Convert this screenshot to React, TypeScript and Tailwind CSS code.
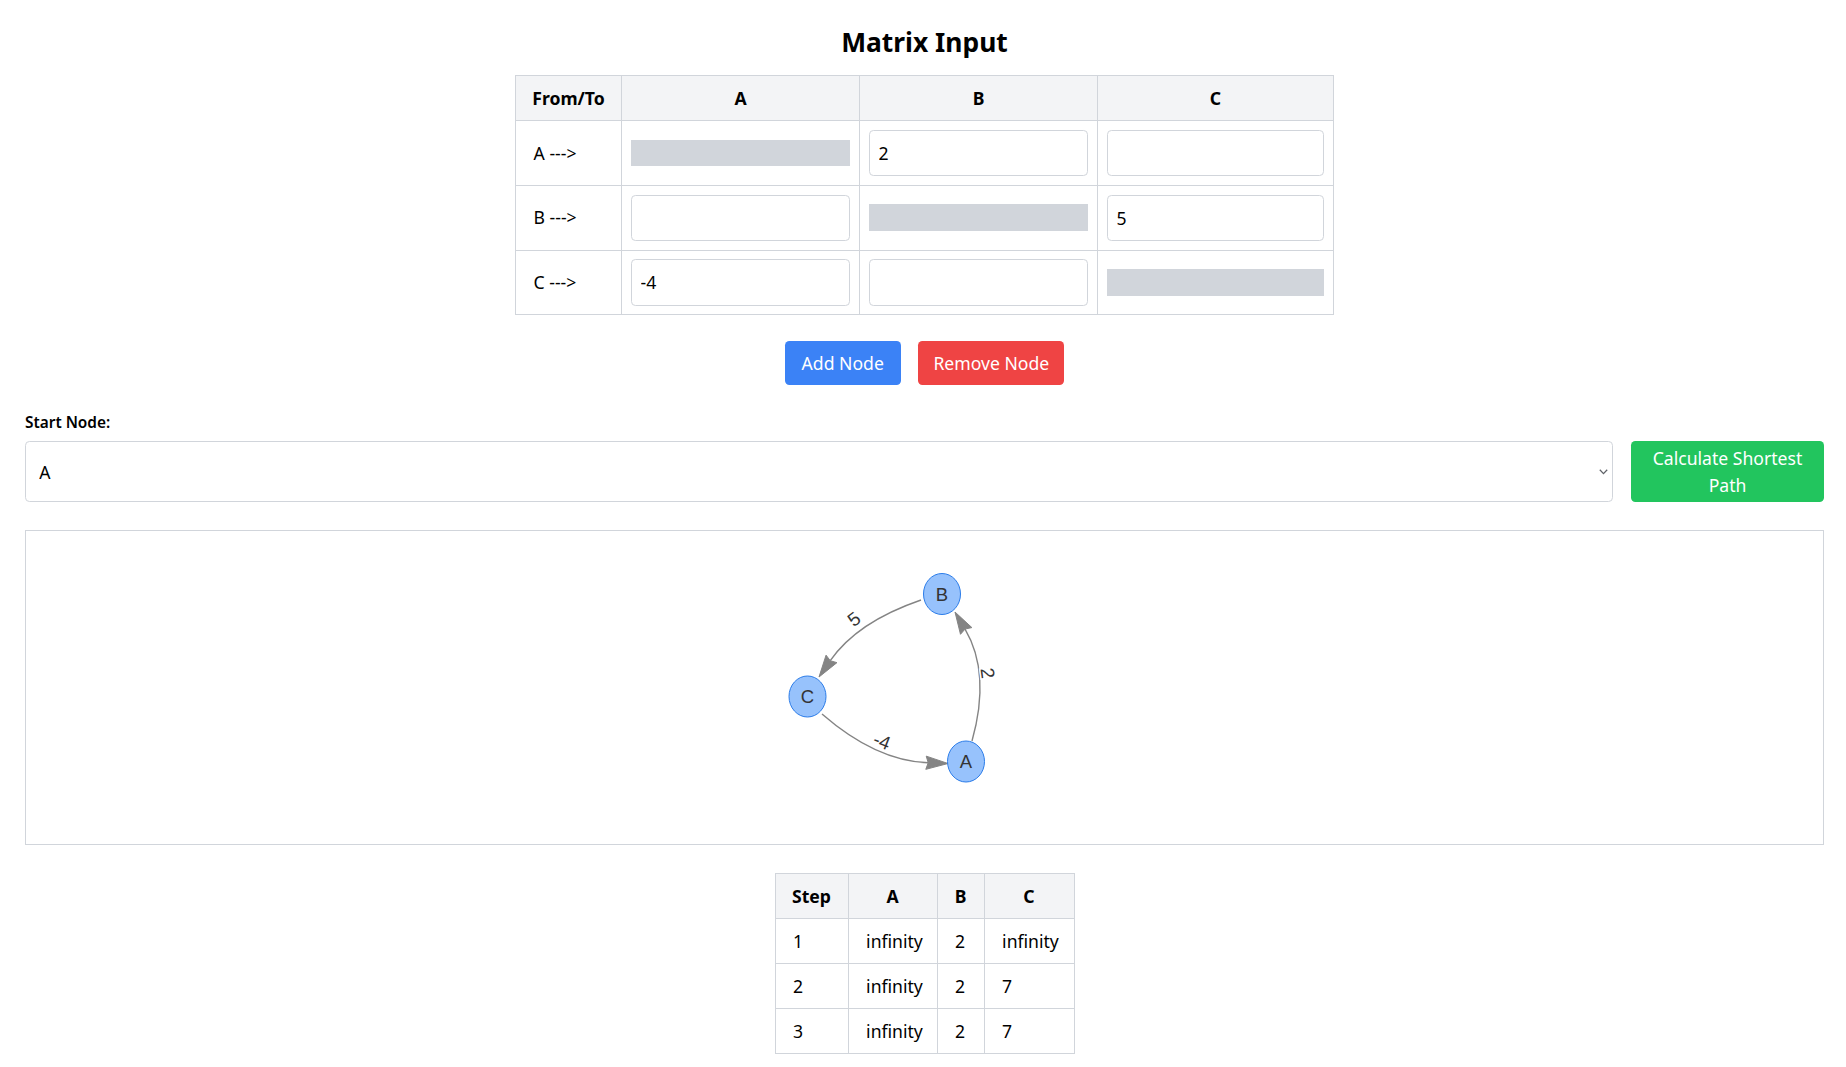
import React from "react";

const nodeNames = ["A", "B", "C"];

// null = diagonal (no self edge)
const matrix: (string | null)[][] = [
  [null, "2", ""],
  ["", null, "5"],
  ["-4", "", null],
];

const steps = [
  { step: 1, dist: ["infinity", "2", "infinity"] },
  { step: 2, dist: ["infinity", "2", "7"] },
  { step: 3, dist: ["infinity", "2", "7"] },
];

type Pt = [number, number];

const graphNodes: { id: string; x: number; y: number }[] = [
  { id: "B", x: 942, y: 595 },
  { id: "C", x: 807.5, y: 697.5 },
  { id: "A", x: 966, y: 762.5 },
];

const graphEdges: { s: Pt; q: Pt; t: Pt; label: string; lx: number; ly: number }[] = [
  { s: [921, 601], q: [857, 623], t: [819, 678], label: "5", lx: 854, ly: 620 },
  { s: [972, 742], q: [991, 674], t: [955, 613], label: "2", lx: 988, ly: 674 },
  { s: [822, 715], q: [876, 762], t: [948, 764.5], label: "-4", lx: 882, ly: 742 },
];

function Edge({ s, q, t, label, lx, ly }: { s: Pt; q: Pt; t: Pt; label: string; lx: number; ly: number }) {
  const dx = t[0] - q[0];
  const dy = t[1] - q[1];
  const len = Math.hypot(dx, dy);
  const ux = dx / len;
  const uy = dy / len;
  const px = -uy;
  const py = ux;
  const L = 22;
  const arrow = [
    [t[0], t[1]],
    [t[0] - L * ux + 0.3 * L * px, t[1] - L * uy + 0.3 * L * py],
    [t[0] - 0.9 * L * ux, t[1] - 0.9 * L * uy],
    [t[0] - L * ux - 0.3 * L * px, t[1] - L * uy - 0.3 * L * py],
  ]
    .map((p) => p.join(","))
    .join(" ");
  let ang = (Math.atan2(t[1] - s[1], t[0] - s[0]) * 180) / Math.PI;
  if (ang > 90) ang -= 180;
  if (ang < -90) ang += 180;

  return (
    <g>
      <path d={`M${s[0]},${s[1]} Q${q[0]},${q[1]} ${t[0] - 0.9 * L * ux},${t[1] - 0.9 * L * uy}`} fill="none" stroke="#848484" strokeWidth={1.4} />
      <polygon points={arrow} fill="#848484" stroke="#848484" strokeWidth={1} strokeLinejoin="round" />
      <text
        x={lx}
        y={ly + 6.8}
        transform={`rotate(${ang} ${lx} ${ly})`}
        textAnchor="middle"
        fontSize={19}
        fontFamily="'Liberation Sans', Arial, sans-serif"
        fill="#343434"
        stroke="#ffffff"
        strokeWidth={3}
        paintOrder="stroke"
      >
        {label}
      </text>
    </g>
  );
}

function GraphView() {
  return (
    <svg className="block w-full h-full" viewBox="26 532 1797 313">
      {graphEdges.map((e) => (
        <Edge key={e.label} {...e} />
      ))}
      {graphNodes.map((n) => (
        <g key={n.id}>
          <ellipse cx={n.x} cy={n.y} rx={18.5} ry={20.5} fill="#97C2FC" stroke="#2B7CE9" strokeWidth={1} />
          <text x={n.x} y={n.y + 6.6} textAnchor="middle" fontSize={18.5} fontFamily="'Liberation Sans', Arial, sans-serif" fill="#343434">
            {n.id}
          </text>
        </g>
      ))}
    </svg>
  );
}

export default function App() {
  const [startNode, setStartNode] = React.useState("A");

  return (
    <div className="min-h-screen w-full bg-white text-black font-['Noto_Sans',sans-serif] text-[17.6px] leading-[26.4px] pl-[25px] pr-[22px] pt-[25px] pb-10">
      {/* Matrix Input */}
      <h1 className="text-center text-[26.4px] leading-[35px] font-bold mb-[15px]">Matrix Input</h1>
      <table className="table-fixed w-[818px] mx-auto border-collapse">
        <colgroup>
          <col className="w-[106px]" />
          <col className="w-[238px]" />
          <col className="w-[238px]" />
          <col className="w-[236px]" />
        </colgroup>
        <thead>
          <tr className="bg-[#f3f4f6]">
            <th className="border border-[#d1d5db] px-[8.8px] py-[8.8px] font-bold text-center">From/To</th>
            {nodeNames.map((n) => (
              <th key={n} className="border border-[#d1d5db] px-[8.8px] py-[8.8px] font-bold text-center">
                {n}
              </th>
            ))}
          </tr>
        </thead>
        <tbody>
          {matrix.map((row, i) => (
            <tr key={i}>
              <td className="border border-[#d1d5db] px-[17.6px] py-[8.8px]">{nodeNames[i]} ---&gt;</td>
              {row.map((val, j) => (
                <td key={j} className="border border-[#d1d5db] px-[8.8px] py-[8.8px]">
                  {val === null ? (
                    <div className="h-[26.4px] w-full bg-[#d1d5db]" />
                  ) : (
                    <input
                      type="text"
                      defaultValue={val}
                      className="block w-full h-[46.2px] border border-[#d1d5db] rounded-[4.4px] px-[8.8px] outline-none"
                    />
                  )}
                </td>
              ))}
            </tr>
          ))}
        </tbody>
      </table>

      <div className="flex justify-center gap-[17.6px] mt-[26px]">
        <button className="w-[116px] h-[44px] bg-[#3b82f6] text-white rounded-[4.4px]">Add Node</button>
        <button className="w-[146px] h-[44px] bg-[#ef4444] text-white rounded-[4.4px]">Remove Node</button>
      </div>

      {/* Start node + calculate */}
      <label className="block mt-[27px] mb-[7px] text-[15.4px] leading-[22px] font-semibold">Start Node:</label>
      <div className="flex items-stretch gap-[18px]">
        <div className="relative flex-1">
          <select
            value={startNode}
            onChange={(e) => setStartNode(e.target.value)}
            className="block w-full h-[61px] appearance-none border border-[#d1d5db] rounded-[4.4px] bg-white px-[13.2px] outline-none"
          >
            {nodeNames.map((n) => (
              <option key={n} value={n}>
                {n}
              </option>
            ))}
          </select>
          <svg className="absolute right-[5px] top-[28px] pointer-events-none" width="9" height="6" viewBox="0 0 9 6">
            <path d="M0.8 0.8 L4.5 4.6 L8.2 0.8" fill="none" stroke="#5f6368" strokeWidth="1.3" />
          </svg>
        </div>
        <button className="w-[193px] shrink-0 bg-[#22c55e] text-white rounded-[4.4px] px-[17.6px] py-[4px] text-center">
          Calculate Shortest Path
        </button>
      </div>

      {/* Graph */}
      <div className="mt-[28px] h-[315px] border border-[#d1d5db]">
        <GraphView />
      </div>

      {/* Steps */}
      <table className="table-fixed w-[299px] mx-auto mt-[28px] border-collapse">
        <colgroup>
          <col className="w-[73px]" />
          <col className="w-[89px]" />
          <col className="w-[47px]" />
          <col className="w-[90px]" />
        </colgroup>
        <thead>
          <tr className="bg-[#f3f4f6]">
            <th className="border border-[#d1d5db] px-[8px] py-[8.8px] font-bold text-center">Step</th>
            {nodeNames.map((n) => (
              <th key={n} className="border border-[#d1d5db] px-[8px] py-[8.8px] font-bold text-center">
                {n}
              </th>
            ))}
          </tr>
        </thead>
        <tbody>
          {steps.map((s) => (
            <tr key={s.step}>
              <td className="border border-[#d1d5db] pl-[17.6px] pr-1 py-[8.8px]">{s.step}</td>
              {s.dist.map((d, j) => (
                <td key={j} className="border border-[#d1d5db] pl-[17.6px] pr-1 py-[8.8px] whitespace-nowrap">
                  {d}
                </td>
              ))}
            </tr>
          ))}
        </tbody>
      </table>
    </div>
  );
}
